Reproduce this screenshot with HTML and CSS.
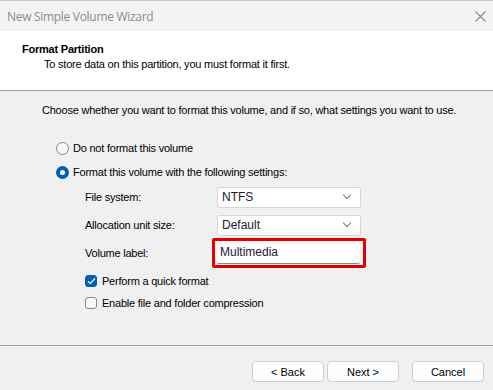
FILE: index.html
```html
<!DOCTYPE html>
<html lang="en">
<head>
    <meta charset="UTF-8">
    <title>New Simple Volume Wizard</title>
    <link rel="stylesheet" href="styles.css">
</head>
<body>
    <div class="window">
        <div class="titlebar">
            <span class="title">New Simple Volume Wizard</span>
            <svg class="close" width="11" height="11" viewBox="0 0 11 11">
                <path d="M0.5 0.5 L10.5 10.5 M10.5 0.5 L0.5 10.5" stroke="#8a8a8a" stroke-width="1.1" fill="none"/>
            </svg>
        </div>

        <div class="header">
            <h1>Format Partition</h1>
            <p>To store data on this partition, you must format it first.</p>
        </div>

        <div class="content">
            <p class="intro">Choose whether you want to format this volume, and if so, what settings you want to use.</p>

            <div class="options">
                <div class="option">
                    <span class="radio"></span>
                    <span>Do not format this volume</span>
                </div>
                <div class="option">
                    <span class="radio checked"></span>
                    <span>Format this volume with the following settings:</span>
                </div>
            </div>

            <div class="settings">
                <div class="row">
                    <span class="label">File system:</span>
                    <div class="select">NTFS<span class="chev"></span></div>
                </div>
                <div class="row">
                    <span class="label">Allocation unit size:</span>
                    <div class="select">Default<span class="chev"></span></div>
                </div>
                <div class="row">
                    <span class="label">Volume label:</span>
                    <div class="highlight">
                        <div class="textbox">Multimedia</div>
                    </div>
                </div>

                <div class="check-row">
                    <span class="checkbox checked">
                        <svg width="9" height="8" viewBox="0 0 9 8"><path d="M1 4.2 L3.4 6.5 L8 1.5" stroke="#fff" stroke-width="1.2" fill="none"/></svg>
                    </span>
                    <span>Perform a quick format</span>
                </div>
                <div class="check-row">
                    <span class="checkbox"></span>
                    <span>Enable file and folder compression</span>
                </div>
            </div>
        </div>

        <div class="footer">
            <button>&lt; Back</button>
            <button>Next &gt;</button>
            <button class="cancel">Cancel</button>
        </div>
    </div>
</body>
</html>
```

FILE: styles.css
```css
* {
    box-sizing: border-box;
    margin: 0;
    padding: 0;
}

body {
    background-color: #f0f0f0;
    font-family: 'Liberation Sans', Arial, sans-serif;
    font-size: 11px;
    letter-spacing: -0.22px;
    color: #000;
}

.window {
    height: 390px;
    display: flex;
    flex-direction: column;
    border-top: 1px solid #c8c8c8;
}

.titlebar {
    height: 30px;
    background-color: #f3f3f3;
    display: flex;
    align-items: center;
    justify-content: space-between;
    padding: 0 7px 0 7px;
}

.title {
    font-family: 'Open Sans', sans-serif;
    font-size: 12px;
    letter-spacing: -0.3px;
    color: #8c8c8c;
}

.header {
    height: 60px;
    background-color: #fff;
    border-bottom: 1px solid #a0a0a0;
    padding: 11px 0 0 22px;
}

.header h1 {
    font-size: 11px;
    font-weight: bold;
    line-height: 14px;
}

.header p {
    margin: 1px 0 0 22px;
    line-height: 14px;
}

.content {
    flex: 1;
    padding: 12px 0 0 42px;
    border-bottom: 1px solid #a0a0a0;
}

.intro {
    line-height: 14px;
    margin-bottom: 24px;
}

.options {
    display: flex;
    flex-direction: column;
    gap: 10px;
    padding-left: 14px;
}

.option {
    display: flex;
    align-items: center;
    gap: 4px;
    height: 14px;
}

.radio {
    width: 13px;
    height: 13px;
    border: 1px solid #888;
    border-radius: 50%;
    background-color: #f8f8f8;
}

.radio.checked {
    border: 4px solid #005fb8;
    background-color: #fff;
}

.settings {
    padding: 4px 0 0 43px;
}

.row {
    display: flex;
    align-items: center;
    height: 28px;
}

.label {
    width: 132px;
}

.select {
    width: 144px;
    height: 21px;
    background-color: #fff;
    border: 1px solid #d6d6d6;
    border-radius: 2px;
    padding: 0 0 0 4px;
    display: flex;
    align-items: center;
    justify-content: space-between;
    font-size: 12px;
    letter-spacing: 0;
    color: #1a1a2e;
}

.chev {
    width: 6px;
    height: 6px;
    border-right: 1px solid #777;
    border-bottom: 1px solid #777;
    transform: rotate(45deg);
    margin: 0 10px 4px 0;
}

.highlight {
    margin-left: -5px;
    border: 3px solid #e00000;
    border-radius: 2px;
    padding: 1px 3px 1px 2px;
}

.textbox {
    width: 143px;
    height: 22px;
    background-color: #fff;
    border-bottom: 1px solid #8a8a8a;
    border-radius: 2px;
    padding: 3px 0 0 3px;
    font-size: 12px;
    letter-spacing: 0;
    color: #1a1a2e;
}

.check-row {
    display: flex;
    align-items: center;
    gap: 5px;
    height: 14px;
    margin-top: 7px;
}

.check-row + .check-row {
    margin-top: 8px;
}

.checkbox {
    width: 12px;
    height: 12px;
    border: 1px solid #888;
    border-radius: 3px;
    background-color: #f8f8f8;
    display: flex;
    align-items: center;
    justify-content: center;
}

.checkbox.checked {
    background-color: #005fb8;
    border-color: #005fb8;
}

.footer {
    height: 44px;
    display: flex;
    justify-content: flex-end;
    align-items: flex-start;
    padding: 15px 9px 0 0;
    gap: 3px;
}

.footer button {
    width: 72px;
    height: 21px;
    background-color: #fdfdfd;
    border: 1px solid #d0d0d0;
    border-radius: 4px;
    font-family: 'Liberation Sans', Arial, sans-serif;
    font-size: 11px;
    color: #000;
}

.footer .cancel {
    margin-left: 10px;
}
```
